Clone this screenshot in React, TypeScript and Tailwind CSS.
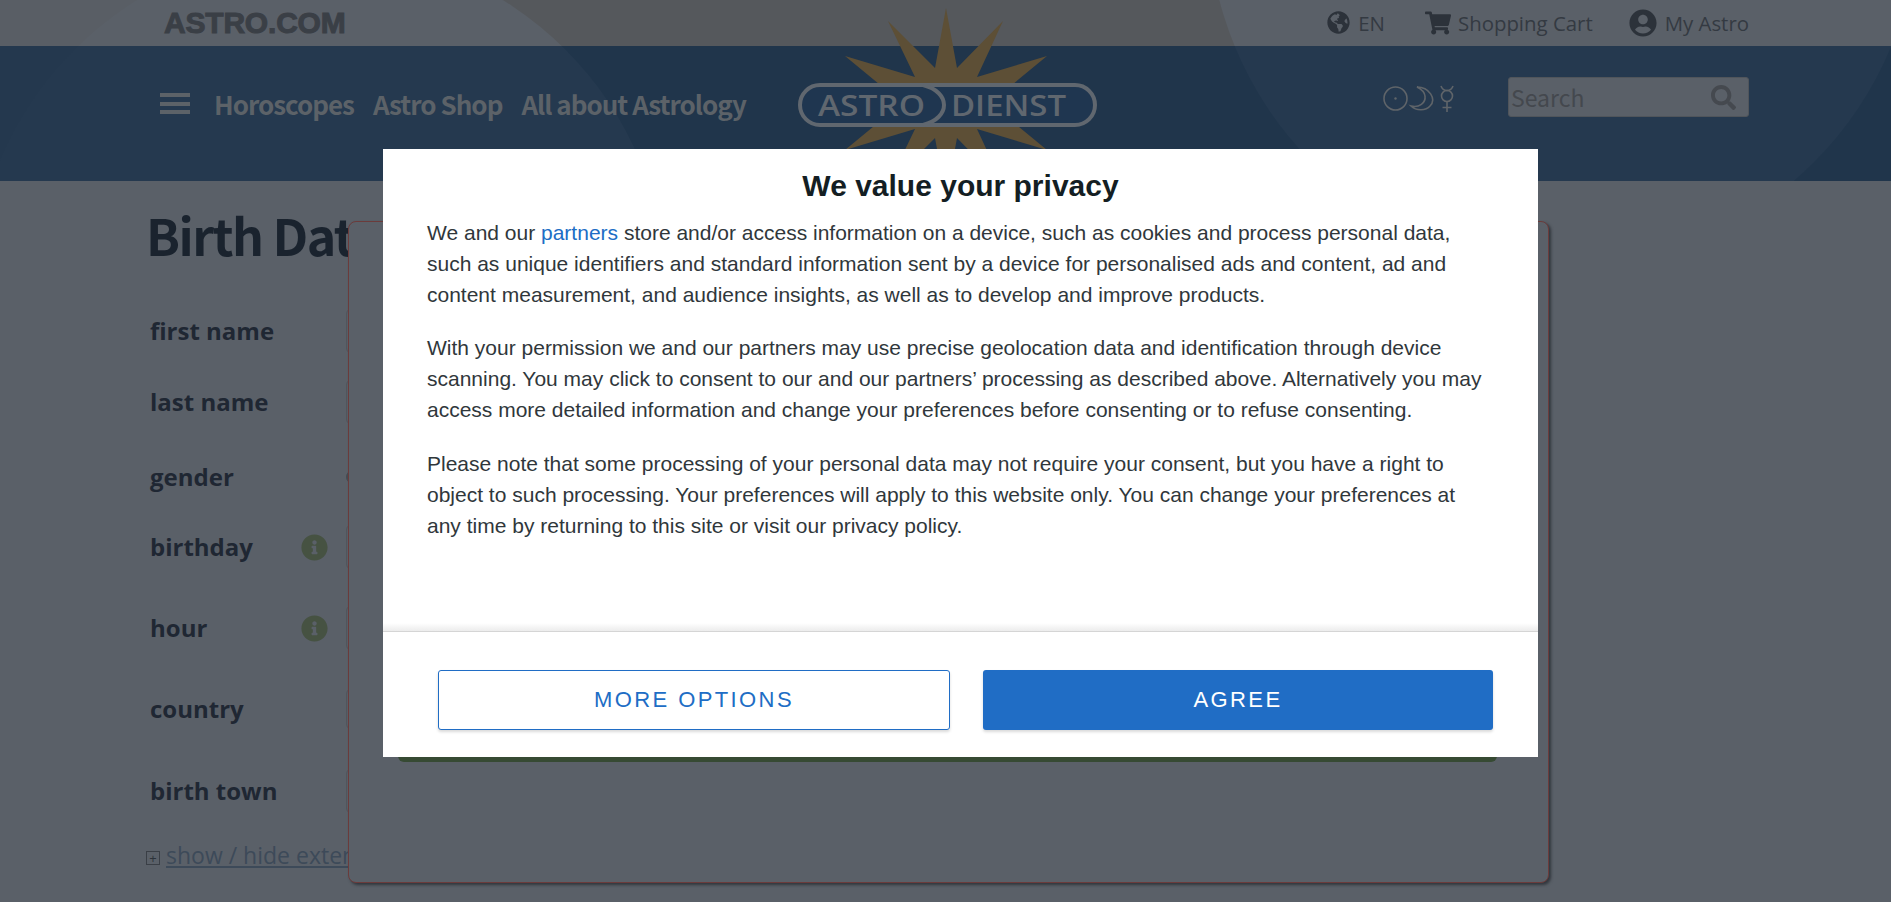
import { FaGlobeAmericas, FaShoppingCart, FaUserCircle, FaSearch, FaInfoCircle } from "react-icons/fa";

const sans = "font-['Open_Sans',sans-serif]";
const nav = "font-['Noto_Sans_CJK_SC',sans-serif]";

const rows = [
  { label: "first name", h: "h-[71px]", input: "h-[46px]" },
  { label: "last name", h: "h-[75px]", input: "h-[46px]" },
  { label: "gender", h: "h-[70px]", radio: true },
  { label: "birthday", h: "h-[81px]", info: true, input: "h-[46px]" },
  { label: "hour", h: "h-[81px]", info: true, input: "h-[46px]" },
  { label: "country", h: "h-[82px]", input: "h-[42px]" },
  { label: "birth town", h: "h-[64px]", input: "h-[46px]" },
];

function Logo() {
  const star =
    "946,8 957,68 1003,21 977,77 1047,56 990,103 1047,150 977,129 1003,185 957,138 946,198 935,138 888,185 915,129 845,150 902,103 845,56 915,77 888,21 935,68";
  return (
    <svg className="absolute left-0 top-0" width="1891" height="181" viewBox="0 0 1891 181">
      <polygon points={star} fill="#5d4f36" />
      <rect x="800" y="85" width="295" height="40" rx="20" fill="#1f3650" stroke="#60676f" strokeWidth="4" />
      <path d="M923 85 C 951 92 951 118 923 125" fill="none" stroke="#60676f" strokeWidth="4" />
      <text x="818" y="116" fill="#60676f" fontFamily="'Open Sans', sans-serif" fontWeight="600" fontSize="29" textLength="107" lengthAdjust="spacingAndGlyphs">
        ASTRO
      </text>
      <text x="951" y="116" fill="#60676f" fontFamily="'Open Sans', sans-serif" fontWeight="600" fontSize="29" textLength="115" lengthAdjust="spacingAndGlyphs">
        DIENST
      </text>
    </svg>
  );
}

function Planets() {
  return (
    <svg width="72" height="28" viewBox="0 0 72 28" fill="none" stroke="#5f6469" strokeWidth="1.6">
      <circle cx="12.5" cy="13.5" r="11.5" />
      <circle cx="12.5" cy="13.5" r="1.2" fill="#5f6469" stroke="none" />
      <path d="M34 2 C46 2 54 14 47 21 C43 26 33 26 28 21 C36 23 43 18 42 11 C41.5 7 38 4 34 2 Z" />
      <circle cx="64" cy="11" r="5.5" />
      <path d="M58 1 C 59 4 61 5.5 64 5.5 C 67 5.5 69 4 70 1 M64 16.5 V27 M59.5 22.5 H68.5" />
    </svg>
  );
}

export default function App() {
  return (
    <div className="relative min-h-screen overflow-hidden bg-[#5a6068]">
      <header className="relative overflow-hidden">
        <div className="h-[46px] bg-[linear-gradient(90deg,#595e65_320px,#55585c_320px,#55585c_1563px,#585c62_1563px)]" />
        <div className="h-[135px] bg-[linear-gradient(90deg,#24384e_320px,#20354b_320px,#20354b_1563px,#20354b_1563px)]" />
        <div className="absolute left-[-27px] top-[-52px] h-[694px] w-[694px] rounded-full bg-[linear-gradient(#5a6068_98px,#25394f_98px)]" />
        <div className="absolute left-[1208px] top-[-444px] h-[710px] w-[710px] rounded-full bg-[linear-gradient(#5a6068_490px,#25394f_490px)]" />
        <Logo />

        <div className="absolute inset-x-0 top-0 flex h-[46px] items-center justify-between pl-[164px] pr-[142px] text-[20.4px] text-[#343a42]">
          <span className="font-['Liberation_Sans',sans-serif] text-[30px] font-bold leading-none tracking-[-0.2px] text-[#3a3f46] [-webkit-text-stroke:1px_#3a3f46]">
            ASTRO.COM
          </span>
          <div className={`flex items-center ${sans}`}>
            <FaGlobeAmericas className="mr-2 h-[23px] w-[23px] text-[#2c323a]" />
            <span>EN</span>
            <FaShoppingCart className="ml-10 mr-[7px] h-[24px] w-[26px] text-[#2c323a]" />
            <span>Shopping Cart</span>
            <FaUserCircle className="ml-[36px] mr-2 h-[28px] w-[28px] text-[#2c323a]" />
            <span>My Astro</span>
          </div>
        </div>

        <div className="absolute inset-x-0 top-[46px] flex h-[135px] items-start pl-[160px] pr-[142px]">
          <div className="mt-[47px] flex h-[21px] w-[30px] flex-col justify-between">
            <span className="h-[4px] bg-[#5c6268]" />
            <span className="h-[4px] bg-[#5c6268]" />
            <span className="h-[4px] bg-[#5c6268]" />
          </div>
          <nav className={`ml-[24px] mt-[35px] flex gap-[19px] text-[26px] font-bold leading-[46px] tracking-[-1px] text-[#5c6268] ${nav}`}>
            <span>Horoscopes</span>
            <span>Astro Shop</span>
            <span>All about Astrology</span>
          </nav>
          <div className="ml-auto mt-[39px]">
            <Planets />
          </div>
          <div className="ml-[53px] mt-[31px] flex h-[40px] w-[241px] items-center justify-between rounded-[3px] border border-[#50555b] bg-[#5a6068] pl-[2px] pr-[12px]">
            <span className={`text-[23px] text-[#44484e] ${nav}`}>Search</span>
            <FaSearch className="h-[25px] w-[25px] text-[#45494f]" />
          </div>
        </div>
      </header>

      <main className={`pl-[146px] ${sans}`}>
        <h1 className={`mt-[8px] h-[126px] whitespace-nowrap text-[50px] font-bold leading-[90px] tracking-[-1.5px] text-[#1a232e] ${nav}`}>
          Birth Data
        </h1>
        <div className="pl-[4px]">
          {rows.map((r) => (
            <div key={r.label} className={r.h}>
              <div className="flex h-[32px] items-center">
                <span className="w-[142px] text-[24px] font-bold text-[#1f2733]">{r.label}</span>
                <span className="flex w-[45px] justify-center">
                  {r.info && <FaInfoCircle className="h-[27px] w-[27px] text-[#465242]" />}
                </span>
                {r.input && <div className={`ml-[9px] w-[40px] shrink-0 rounded-l-[6px] border border-[#50555c] ${r.input}`} />}
                {r.radio && <div className="ml-[9px] h-[14px] w-[14px] rounded-full border border-[#464b52] bg-[#464b52]" />}
              </div>
            </div>
          ))}
        </div>
        <div className="flex h-[32px] items-center">
          <span className="mt-[6px] flex h-[14px] w-[14px] items-center justify-center border border-[#3a3f46] text-[13px] leading-none text-[#2c323a]">
            +
          </span>
          <a className="ml-[6px] whitespace-nowrap text-[23px] leading-[32px] text-[#3d4a59] underline">
            show / hide extended settings
          </a>
        </div>
      </main>

      <div className="absolute left-[348px] top-[221px] flex h-[662px] w-[1201px] flex-col rounded-[8px] border border-[#6b3b3b] bg-[#5a6068] pb-[120px] pl-[49px] pr-[51px] pt-[400px] shadow-[2px_2px_3px_#31363d]">
        <div className="mt-auto h-[44px] rounded-b-[6px] bg-[#364a33]" />
      </div>

      <div className="absolute left-[383px] top-[149px] flex h-[608px] w-[1155px] flex-col bg-white font-['Liberation_Sans',sans-serif]">
        <div className="relative h-[482px] px-[44px] text-[21px] leading-[31px] text-[#30373b]">
          <h2 className="pt-[18px] text-center text-[30px] font-bold leading-[38px] text-[#141e23]">We value your privacy</h2>
          <p className="mt-[12px]">
            We and our <a className="text-[#206dc5]">partners</a> store and/or access information on a device, such as cookies and process personal data, such as unique identifiers and standard information sent by a device for personalised ads and content, ad and content measurement, and audience insights, as well as to develop and improve products.
          </p>
          <p className="mt-[22px]">
            With your permission we and our partners may use precise geolocation data and identification through device scanning. You may click to consent to our and our partners’ processing as described above. Alternatively you may access more detailed information and change your preferences before consenting or to refuse consenting.
          </p>
          <p className="mt-[23px]">
            Please note that some processing of your personal data may not require your consent, but you have a right to object to such processing. Your preferences will apply to this website only. You can change your preferences at any time by returning to this site or visit our privacy policy.
          </p>
          <div className="absolute inset-x-0 bottom-0 h-[8px] bg-gradient-to-b from-white to-[#ececec]" />
        </div>
        <div className="flex flex-1 items-start gap-[33px] border-t border-[#d5d5d5] pl-[55px] pr-[45px] pt-[38px]">
          <button className="h-[60px] w-[512px] rounded-[3px] border border-[#206dc5] bg-white pb-[2px] text-[22px] tracking-[2.4px] text-[#206dc5] shadow-[0_2px_3px_rgba(0,0,0,0.15)]">
            MORE OPTIONS
          </button>
          <button className="h-[60px] w-[510px] rounded-[3px] bg-[#206dc5] pb-[2px] text-[22px] tracking-[2.4px] text-white shadow-[0_2px_3px_rgba(0,0,0,0.15)]">
            AGREE
          </button>
        </div>
      </div>
    </div>
  );
}
